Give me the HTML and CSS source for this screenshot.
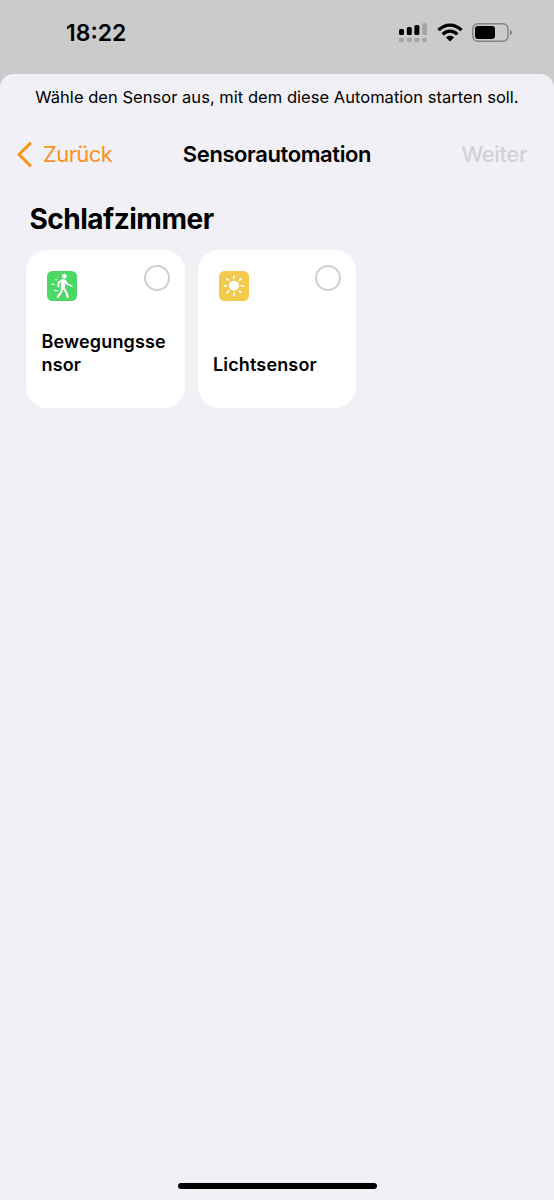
FILE: index.html
```html
<!DOCTYPE html>
<html lang="de">
<head>
    <meta charset="UTF-8">
    <meta name="viewport" content="width=device-width, initial-scale=1.0">
    <title>Sensorautomation</title>
    <link rel="stylesheet" href="styles.css">
</head>
<body>
    <!-- Statusleiste -->
    <div class="statusbar">
        <span class="time">18:22</span>
        <div class="status-icons">
            <svg class="signal" width="28" height="20" viewBox="0 0 28 20">
                <rect x="0" y="6" width="5" height="6" rx="1.5"/>
                <rect x="7.8" y="4" width="5" height="8" rx="1.5"/>
                <rect x="15.4" y="2" width="5" height="10" rx="1.5"/>
                <g fill="#a6a6a6">
                    <rect x="23.2" y="0" width="4.8" height="12" rx="1.5"/>
                    <rect x="0" y="14.7" width="5" height="4.6" rx="1.5"/>
                    <rect x="7.8" y="14.7" width="5" height="4.6" rx="1.5"/>
                    <rect x="15.4" y="14.7" width="5" height="4.6" rx="1.5"/>
                    <rect x="23.2" y="14.7" width="4.8" height="4.6" rx="1.5"/>
                </g>
            </svg>
            <svg class="wifi" width="26" height="19" viewBox="0 0 26 19">
                <g fill="none" stroke="#000" stroke-width="3.3">
                    <path d="M1.5 7.2 C8 0.3 18 0.3 24.5 7.2"/>
                    <path d="M5.7 11.4 C9.8 7.1 16.2 7.1 20.3 11.4"/>
                </g>
                <path d="M8.9 14.4 C11.2 12.1 14.8 12.1 17.1 14.4 L13 18.5 Z"/>
            </svg>
            <svg class="battery" width="41" height="19" viewBox="0 0 41 19">
                <rect x="0.8" y="0.8" width="35.2" height="17.4" rx="5" fill="none" stroke="#858585" stroke-width="1.5"/>
                <rect x="3" y="3" width="20" height="13" rx="3"/>
                <path d="M38 6.5 Q40 7.3 40 9.5 Q40 11.7 38 12.5 Z" fill="#858585"/>
            </svg>
        </div>
    </div>

    <main class="sheet">
        <p class="hint">Wähle den Sensor aus, mit dem diese Automation starten soll.</p>

        <nav class="navbar">
            <a class="back" href="#">
                <svg width="15" height="25" viewBox="0 0 15 25"><path d="M13 1.6 L2 12.5 L13 23.4" fill="none" stroke="#f6941e" stroke-width="3" stroke-linecap="round" stroke-linejoin="round"/></svg>
                <span>Zurück</span>
            </a>
            <h1>Sensorautomation</h1>
            <span class="next">Weiter</span>
        </nav>

        <h2>Schlafzimmer</h2>

        <!-- Sensoren -->
        <div class="sensors">
            <div class="card">
                <div class="card-top">
                    <svg class="icon" width="30" height="30" viewBox="0 0 30 30">
                        <rect width="30" height="30" rx="5.5" fill="#4cd865"/>
                        <circle cx="17.3" cy="5.2" r="2.4" fill="#fff"/>
                        <g fill="none" stroke="#fff" stroke-linecap="round" stroke-linejoin="round">
                            <path d="M16.4 10 L15.8 17" stroke-width="4.2"/>
                            <path d="M15 9.2 L11.7 11.4 L11.3 15.4" stroke-width="1.9"/>
                            <path d="M18 9.6 L20.2 13 L24.6 15" stroke-width="1.9"/>
                            <path d="M15.3 17.5 L14.2 21 L10.8 25.8" stroke-width="2.2"/>
                            <path d="M16.5 17 L19 20.8 L20.8 26" stroke-width="2.2"/>
                            <path d="M8.6 8.8 H10 M4.6 13.3 H7.4 M7.6 19.6 H11" stroke-width="1.1"/>
                        </g>
                    </svg>
                    <span class="radio"></span>
                </div>
                <p class="name">Bewegungssensor</p>
            </div>
            <div class="card">
                <div class="card-top">
                    <svg class="icon" width="30" height="30" viewBox="0 0 30 30">
                        <rect width="30" height="30" rx="5.5" fill="#f4ca4d"/>
                        <circle cx="15" cy="14.8" r="5" fill="#fff"/>
                        <g stroke="#fff" stroke-width="1.8" stroke-linecap="round">
                            <path d="M15 5.2 V7.2 M15 22.4 V24.4 M5.4 14.8 H7.4 M22.6 14.8 H24.6"/>
                            <path d="M8.2 8 L9.6 9.4 M20.4 20.2 L21.8 21.6 M8.2 21.6 L9.6 20.2 M20.4 9.4 L21.8 8"/>
                        </g>
                    </svg>
                    <span class="radio"></span>
                </div>
                <p class="name">Lichtsensor</p>
            </div>
        </div>

        <div class="home-indicator"></div>
    </main>
</body>
</html>
```
FILE: styles.css
```css
* {
    box-sizing: border-box;
}

body {
    margin: 0;
    height: 1200px;
    display: flex;
    flex-direction: column;
    background: #cbcbcb;
    color: #000;
    font-family: Inter, "Liberation Sans", sans-serif;
}

h1, h2, p {
    margin: 0;
}

/* Statusleiste */
.statusbar {
    height: 73.5px;
    flex: none;
    display: flex;
    justify-content: space-between;
    padding: 19px 41px 0 66px;
}

.time {
    font-size: 23px;
    line-height: 28px;
    font-weight: 600;
}

.status-icons {
    display: flex;
    align-items: flex-start;
    padding-top: 4px;
}

.wifi {
    margin-left: 10px;
}

.battery {
    margin-left: 9px;
}

/* Blatt */
.sheet {
    flex: 1;
    display: flex;
    flex-direction: column;
    background: #f1f0f6;
    border-radius: 14px 14px 0 0;
}

.hint {
    padding-top: 12px;
    text-align: center;
    font-size: 16.5px;
    line-height: 22px;
    letter-spacing: 0.03px;
    white-space: nowrap;
}

.navbar {
    display: grid;
    grid-template-columns: 1fr auto 1fr;
    align-items: center;
    margin-top: 32.5px;
    font-size: 22px;
    line-height: 28px;
}

.back {
    display: flex;
    align-items: center;
    gap: 11px;
    padding-left: 17px;
    color: #f6941e;
    letter-spacing: -0.6px;
    text-decoration: none;
}

.navbar h1 {
    font-size: 22px;
    font-weight: 600;
    letter-spacing: -0.4px;
}

.next {
    padding-right: 27px;
    text-align: right;
    color: #d2d2d6;
    font-weight: 500;
    letter-spacing: -0.4px;
}

h2 {
    margin: 33px 0 0 29.5px;
    font-size: 28px;
    line-height: 36px;
    font-weight: 700;
    letter-spacing: -0.5px;
}

/* Karten */
.sensors {
    display: flex;
    gap: 13px;
    margin: 12.5px 0 0 26px;
}

.card {
    width: 158.5px;
    height: 158.5px;
    padding: 15px 15px 32px 15.5px;
    display: flex;
    flex-direction: column;
    justify-content: space-between;
    background: #fff;
    border-radius: 21px;
}

.card-top {
    display: flex;
    justify-content: space-between;
    align-items: flex-start;
}

.icon {
    margin: 6px 0 0 5.5px;
}

.radio {
    width: 26px;
    height: 26px;
    border: 2px solid #d0d0d3;
    border-radius: 50%;
}

.name {
    font-size: 18px;
    line-height: 23px;
    font-weight: 600;
    letter-spacing: 0.15px;
    white-space: normal;
    word-break: break-all;
}

.home-indicator {
    width: 199px;
    height: 6px;
    margin: auto auto 11px;
    border-radius: 3px;
    background: #000;
}
```
